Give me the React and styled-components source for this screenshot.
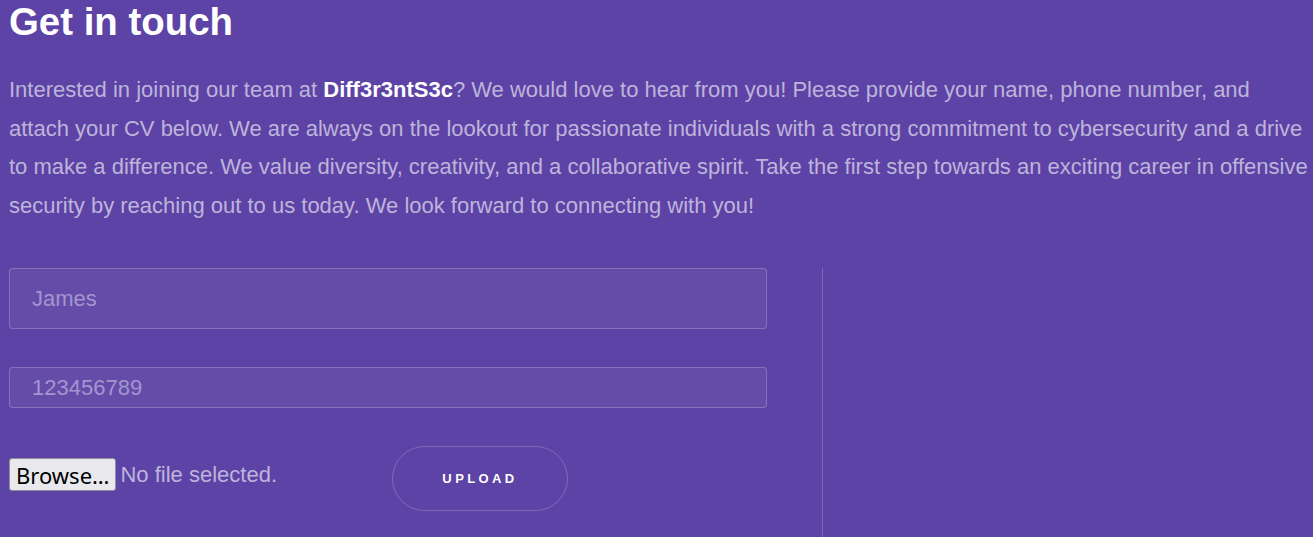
import React from "react";
import styled, { createGlobalStyle } from "styled-components";

const GlobalStyle = createGlobalStyle`
  html, body {
    margin: 0;
    padding: 0;
    background: #5d43a5;
    font-family: "Liberation Sans", Arial, sans-serif;
  }
`;

const Page = styled.section`
  padding: 0 4px 40px 9px;
`;

const Title = styled.h1`
  margin: 0;
  font-size: 38.4px;
  font-weight: 700;
  line-height: 44px;
  color: #ffffff;
`;

const Intro = styled.p`
  margin: 27px 0 0;
  font-size: 22px;
  line-height: 38.5px;
  color: #beb4db;

  strong {
    color: #ffffff;
  }
`;

const Columns = styled.div`
  display: grid;
  grid-template-columns: 813px 1fr;
  margin-top: 43px;
`;

const FormColumn = styled.form`
  display: flex;
  flex-direction: column;
  gap: 38px;
  padding-bottom: 40px;
`;

const SideColumn = styled.div`
  border-left: 1px solid rgba(255, 255, 255, 0.2);
  min-height: 300px;
`;

const Field = styled.input`
  box-sizing: border-box;
  width: 758px;
  height: ${(p) => p.$height}px;
  padding: 0 22px;
  border: 1px solid rgba(255, 255, 255, 0.22);
  border-radius: 4px;
  background: rgba(255, 255, 255, 0.05);
  font-family: "Liberation Sans", Arial, sans-serif;
  font-size: 22px;
  color: #ffffff;
  outline: none;

  &::placeholder {
    color: #a395d0;
  }
`;

const UploadRow = styled.div`
  display: flex;
  align-items: center;
`;

const FilePicker = styled.label`
  display: flex;
  align-items: center;
  gap: 4px;
  width: 383px;
  margin-top: -8px;
`;

const BrowseButton = styled.span`
  box-sizing: border-box;
  display: inline-flex;
  align-items: center;
  height: 33px;
  padding: 0 6px 0 6px;
  border: 1px solid #8f8f9d;
  border-radius: 3px;
  background: #e9e9ed;
  color: #000000;
  font-family: "Noto Sans", "DejaVu Sans", sans-serif;
  font-size: 22px;
`;

const FileName = styled.span`
  font-size: 22px;
  color: #beb4db;
`;

const UploadButton = styled.button`
  box-sizing: border-box;
  width: 176px;
  height: 65px;
  border: 1px solid rgba(255, 255, 255, 0.2);
  border-radius: 33px;
  background: transparent;
  color: #ffffff;
  font-family: "Liberation Sans", Arial, sans-serif;
  font-size: 13px;
  font-weight: 700;
  letter-spacing: 3.4px;
  padding-left: 6px;
  cursor: pointer;
`;

const App = () => (
  <Page>
    <GlobalStyle />
    <Title>Get in touch</Title>
    <Intro>
      Interested in joining our team at <strong>Diff3r3ntS3c</strong>? We would
      love to hear from you! Please provide your name, phone number, and attach
      your CV below. We are always on the lookout for passionate individuals
      with a strong commitment to cybersecurity and a drive to make a
      difference. We value diversity, creativity, and a collaborative spirit.
      Take the first step towards an exciting career in offensive security by
      reaching out to us today. We look forward to connecting with you!
    </Intro>
    <Columns>
      <FormColumn onSubmit={(e) => e.preventDefault()}>
        <Field $height={61} type="text" placeholder="James" />
        <Field $height={41} type="tel" placeholder="123456789" />
        <UploadRow>
          <FilePicker>
            <BrowseButton>Browse…</BrowseButton>
            <FileName>No file selected.</FileName>
          </FilePicker>
          <UploadButton type="submit">UPLOAD</UploadButton>
        </UploadRow>
      </FormColumn>
      <SideColumn />
    </Columns>
  </Page>
);

export default App;
